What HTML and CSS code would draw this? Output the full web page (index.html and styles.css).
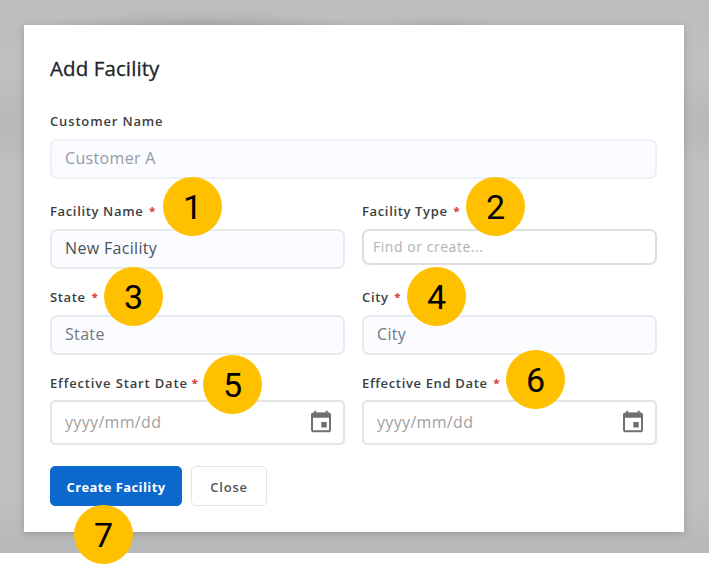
FILE: index.html
```html
<!DOCTYPE html>
<html lang="en">
<head>
<meta charset="utf-8">
<title>Add Facility</title>
<link rel="stylesheet" href="styles.css">
</head>
<body>
<svg class="defs" width="0" height="0" aria-hidden="true">
  <symbol id="calendar" viewBox="0 0 22 23">
    <path d="M5.300 0.700v4M16.700 0.700v4" stroke="currentColor" stroke-width="2" fill="none"/>
    <rect x="2" y="3.500" width="18" height="17.800" rx="1.900" stroke="currentColor" stroke-width="2" fill="none"/>
    <path d="M3 2.700h16a1.800 1.800 0 0 1 1.800 1.800v3.200H1.200V4.500A1.800 1.800 0 0 1 3 2.700z" fill="currentColor"/>
    <rect x="11.300" y="12" width="5.500" height="5.500" rx=".5" fill="currentColor"/>
  </symbol>
</svg>
<div class="backdrop">
  <main class="modal">
    <h1>Add Facility</h1>
    <div class="field customer">
      <label><span>Customer Name</span></label>
      <div class="input faint"><span>Customer A</span></div>
    </div>
    <div class="row names">
      <div class="field">
        <label><span>Facility Name</span> <b>*</b></label>
        <div class="input filled"><span>New Facility</span></div>
      </div>
      <div class="field">
        <label><span>Facility Type</span> <b>*</b></label>
        <div class="input select"><span>Find or create...</span></div>
      </div>
    </div>
    <div class="row places">
      <div class="field">
        <label><span>State</span> <b>*</b></label>
        <div class="input"><span>State</span></div>
      </div>
      <div class="field">
        <label><span>City</span> <b>*</b></label>
        <div class="input"><span>City</span></div>
      </div>
    </div>
    <div class="row dates">
      <div class="field">
        <label class="wide"><span>Effective Start Date</span> <b>*</b></label>
        <div class="input date"><span>yyyy/mm/dd</span><svg class="icon"><use href="#calendar"/></svg></div>
      </div>
      <div class="field">
        <label><span>Effective End Date</span> <b>*</b></label>
        <div class="input date"><span>yyyy/mm/dd</span><svg class="icon"><use href="#calendar"/></svg></div>
      </div>
    </div>
    <div class="actions">
      <button class="primary">Create Facility</button>
      <button class="secondary">Close</button>
    </div>
  </main>
</div>
<div class="badge b1">1</div>
<div class="badge b2">2</div>
<div class="badge b3">3</div>
<div class="badge b4">4</div>
<div class="badge b5">5</div>
<div class="badge b6">6</div>
<div class="badge b7">7</div>
</body>
</html>
```
FILE: styles.css
```css
* { box-sizing: border-box; }
body {
  margin: 0;
  height: 582px;
  overflow: hidden;
  position: relative;
  background: #fff;
  font-family: "Open Sans", "Noto Sans", sans-serif;
}
.defs { position: absolute; }
.backdrop {
  height: 553px;
  padding: 25px 25.500px 21px 24px;
  background:
    radial-gradient(ellipse 160px 16px at 200px 26px, #a9abae 0, rgba(176, 177, 179, .6) 55%, rgba(184, 184, 185, 0) 100%),
    radial-gradient(ellipse 60px 12px at 440px 24px, #b5b5b5 0, rgba(181, 181, 181, 0) 100%),
    linear-gradient(#bdbdbd 0, #c0c0c0 75px, #bababa 110px, #bababa 140px, #c0c0c0 165px, #bfbfbf 500px, #b8b8b8 553px);
}
.modal {
  height: 507px;
  padding: 28px 26.500px 26px 26px;
  background: #fff;
  box-shadow: 0 2px 8px rgba(0, 0, 0, .18);
}
h1 {
  margin: 0 0 29px;
  height: 30px;
  font-size: 20.500px;
  line-height: 31px;
  font-weight: 500;
  letter-spacing: .1px;
  color: #20242b;
  -webkit-text-stroke: .3px #20242b;
}
.field { display: flex; flex-direction: column; gap: 9px; }
label {
  display: flex;
  gap: 6px;
  height: 18px;
  font-size: 13px;
  line-height: 18px;
  font-weight: 600;
  letter-spacing: .65px;
  color: #3b3e43;
}
.wide, .customer label { letter-spacing: .85px; }
.wide { gap: 4px; }
label b { color: #d9454b; font-size: 11px; line-height: 17px; }
.row { display: grid; grid-template-columns: 295px 295px; gap: 17px; }
.input {
  display: flex;
  align-items: center;
  height: 40px;
  padding: 0 13px;
  border: 2px solid #e6ebf0;
  border-radius: 7px;
  background: #fafcff;
  font-size: 16px;
  line-height: 20px;
  letter-spacing: .33px;
  color: #73777d;
}
.input span { position: relative; top: -1px; }
.faint { color: #969ba2; border-color: #edf1f5; }
.filled { color: #4c5058; }
.select {
  height: 36px;
  padding: 2px 9px 0;
  background: #fff;
  border-color: #dedede;
  font-size: 14px;
  letter-spacing: .54px;
  color: #b2b2b2;
}
.date {
  justify-content: space-between;
  height: 45px;
  background: #fff;
  border-color: #e4e4e4;
  border-radius: 5px;
  padding-right: 11px;
  color: #a0a0a0;
}
.icon { width: 22px; height: 23px; margin-top: -2px; color: #707070; }
.names { margin-top: 23px; }
.places { margin-top: 19px; }
.dates { margin-top: 19px; }
.dates .field { gap: 8px; }
.actions { display: flex; gap: 9px; margin-top: 21px; }
button {
  height: 40px;
  padding: 2px 0 0;
  border: 1px solid #dfe4ee;
  border-radius: 5px;
  background: #fff;
  font: 600 13px/20px "Open Sans", sans-serif;
  letter-spacing: .8px;
  color: #50545a;
}
.primary {
  width: 132px;
  background: #0b69cd;
  border-color: #0b69cd;
  color: #fff;
  font-weight: 700;
  letter-spacing: .4px;
}
.secondary { width: 76px; }
.badge {
  position: absolute;
  width: 59px;
  height: 59px;
  border-radius: 50%;
  background: #ffc000;
  color: #000;
  font: 400 34px/60px Roboto, sans-serif;
  text-align: center;
}
.b1 { left: 163px; top: 177px; }
.b2 { left: 466px; top: 177px; }
.b3 { left: 104px; top: 267px; }
.b4 { left: 407px; top: 267px; }
.b5 { left: 203px; top: 355px; }
.b6 { left: 506px; top: 350px; }
.b7 { left: 74px; top: 505px; }
```
